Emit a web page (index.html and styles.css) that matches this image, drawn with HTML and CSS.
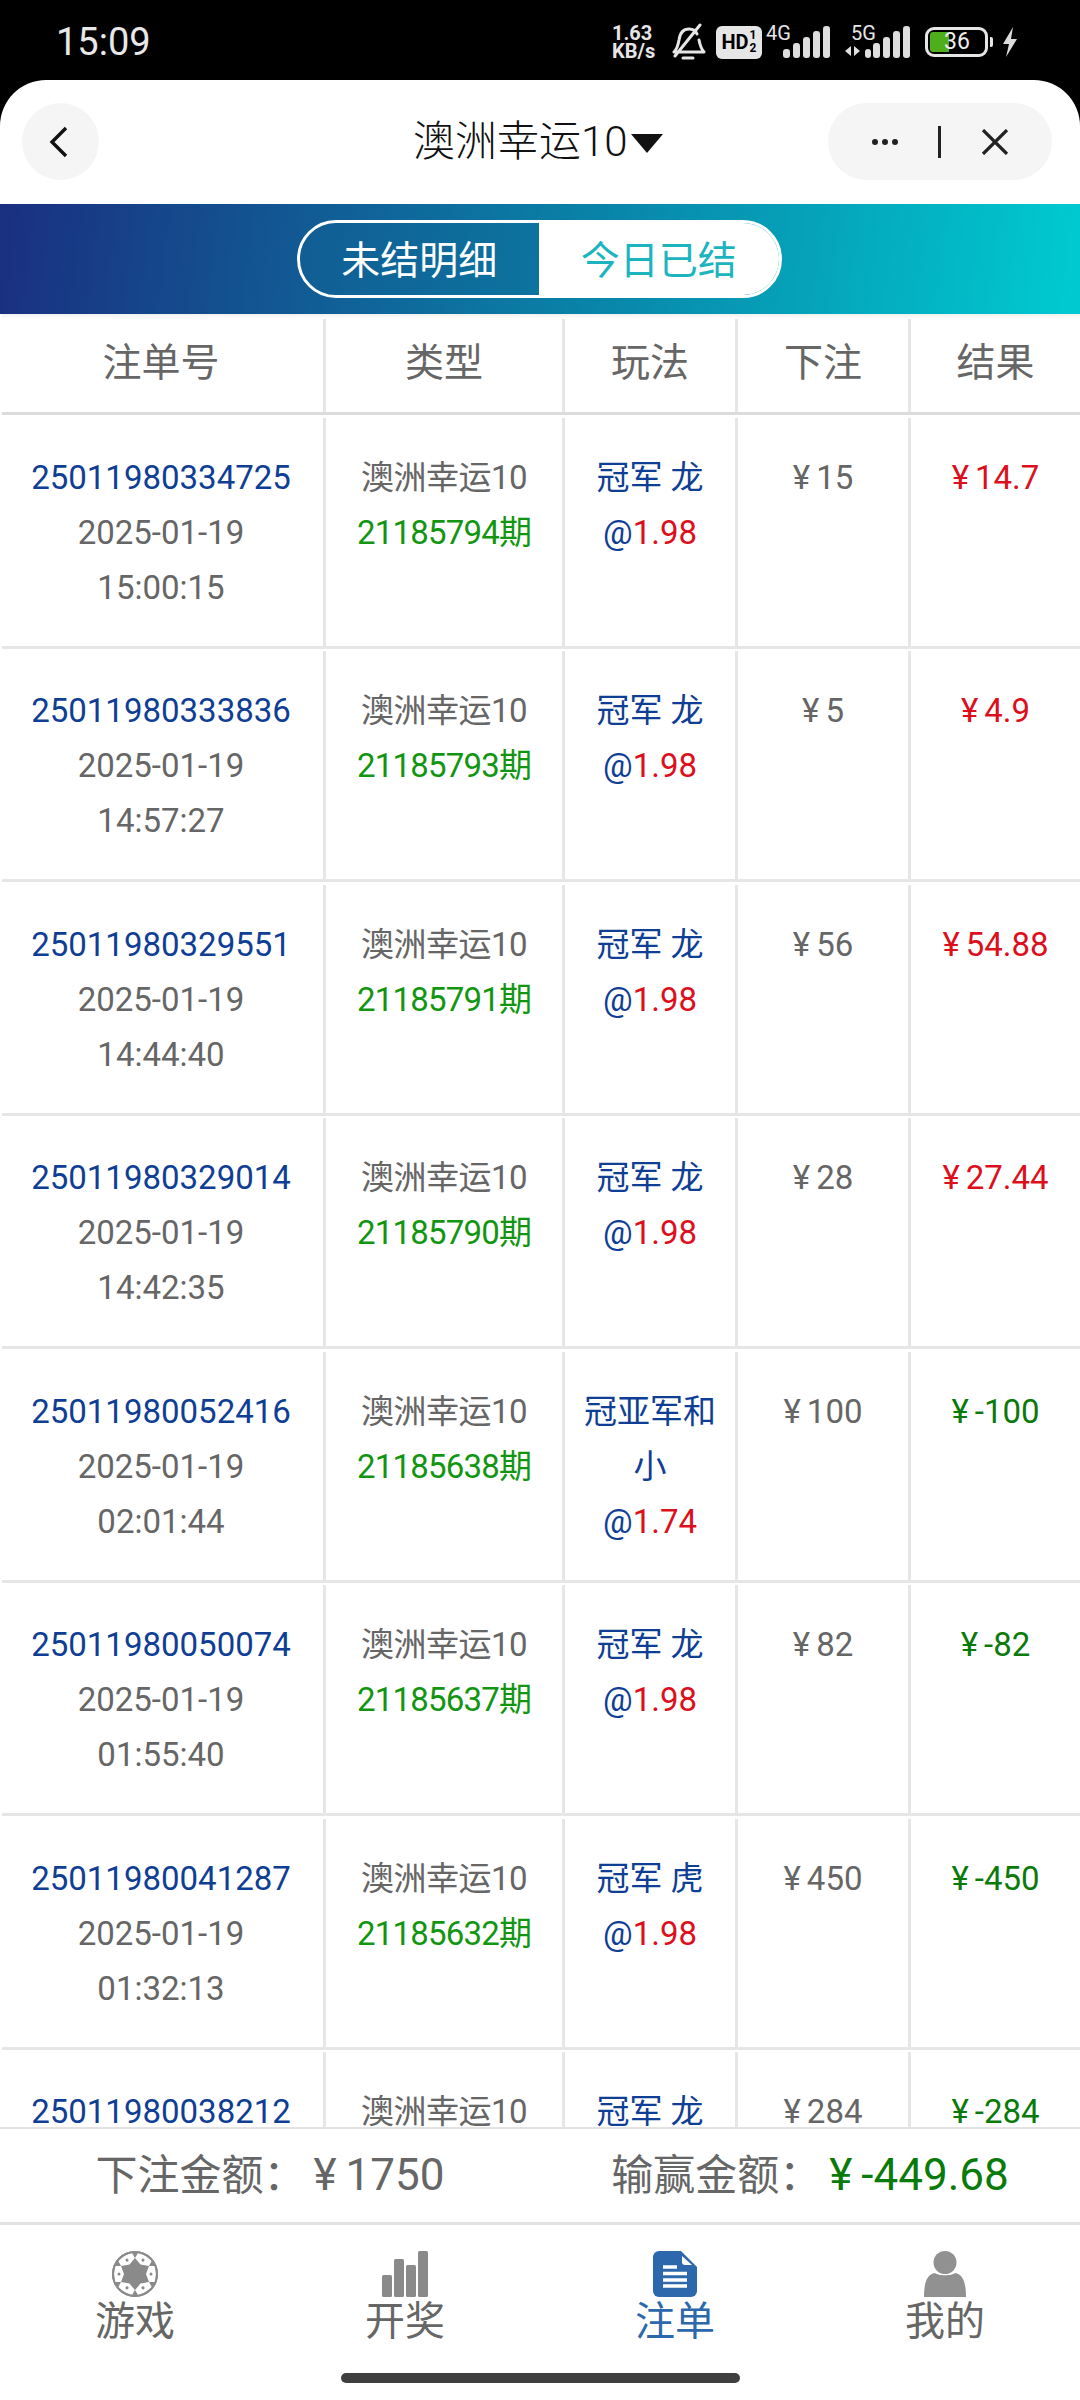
FILE: index.html
```html
<!DOCTYPE html>
<html lang="zh-CN">
<head>
<meta charset="utf-8">
<title>澳洲幸运10</title>
<link rel="stylesheet" href="styles.css">
</head>
<body>
<div class="phone">
  <header class="status">
    <span class="clock">15:09</span>
    <div class="status-icons">
      <span class="speed"><b>1.63</b><b>KB/s</b></span>
      <svg class="bell" viewBox="0 0 36 38" width="36" height="38"><path d="M4 29c3-3 4-6 5-12 1-7 4-11 10-11 4 0 7 2 8 5M29 17c1 5 2 9 5 12H4M13 35h10M5 33 30 2" fill="none" stroke="#e6e6e6" stroke-width="3" stroke-linecap="round" stroke-linejoin="round"/></svg>
      <span class="hd"><b>HD</b><i><b>1</b><b>2</b></i></span>
      <span class="sig"><em>4G</em><svg viewBox="0 0 47 32" width="47" height="32"><rect x="0" y="23" width="7" height="9" rx="3" fill="#dedede"/><rect x="10" y="17" width="7" height="15" rx="3" fill="#dedede"/><rect x="20" y="11" width="7" height="21" rx="3" fill="#dedede"/><rect x="30" y="5" width="7" height="27" rx="3" fill="#dedede"/><rect x="40" y="0" width="7" height="32" rx="3" fill="#dedede"/></svg></span>
      <span class="sig sig5"><em>5G</em><svg viewBox="0 0 65 32" width="65" height="32"><path d="M6 20v10L0 25zM9 20v10l6-5z" fill="#dedede"/><rect x="20" y="23" width="6" height="9" rx="3" fill="#dedede"/><rect x="28" y="17" width="7" height="15" rx="3" fill="#dedede"/><rect x="38" y="11" width="7" height="21" rx="3" fill="#dedede"/><rect x="48" y="5" width="7" height="27" rx="3" fill="#dedede"/><rect x="58" y="0" width="7" height="32" rx="3" fill="#dedede"/></svg></span>
      <span class="battery"><span class="battery-fill"></span><span class="battery-num">36</span></span>
      <span class="nub"></span>
      <svg class="bolt" viewBox="0 0 16 30" width="16" height="30"><path d="M11 0 1 17h6l-3 13 11-18H9z" fill="#dcdcdc"/></svg>
    </div>
  </header>
  <div class="sheet">
    <nav class="topbar">
      <button class="back"><svg viewBox="0 0 20 32" width="20" height="32"><path d="M17 2 3 16l14 14" fill="none" stroke="#111" stroke-width="3.4"/></svg></button>
      <h1 class="title">澳洲幸运10<span class="caret"></span></h1>
      <div class="capsule">
        <svg viewBox="0 0 28 8" width="28" height="8"><circle cx="4" cy="4" r="3" fill="#222"/><circle cx="14" cy="4" r="3" fill="#222"/><circle cx="24" cy="4" r="3" fill="#222"/></svg>
        <span class="cap-div"></span>
        <svg viewBox="0 0 28 26" width="28" height="26"><path d="M2 1l24 24M26 1 2 25" fill="none" stroke="#222" stroke-width="3.2"/></svg>
      </div>
    </nav>
    <div class="band">
      <div class="seg">
        <span class="seg-item">未结明细</span>
        <span class="seg-item seg-on">今日已结</span>
      </div>
    </div>
    <div class="thead row-grid">
      <div>注单号</div><div>类型</div><div>玩法</div><div>下注</div><div>结果</div>
    </div>
    <div class="tbody">
      <div class="row row-grid">
        <div class="cell"><p class="blue">25011980334725</p><p>2025-01-19</p><p>15:00:15</p></div>
        <div class="cell"><p class="game">澳洲幸运10</p><p class="green">21185794期</p></div>
        <div class="cell"><p class="blue">冠军 龙</p><p class="blue">@<span class="red">1.98</span></p></div>
        <div class="cell"><p><span class="yen">¥</span>15</p></div>
        <div class="cell"><p class="red"><span class="yen">¥</span>14.7</p></div>
      </div>
      <div class="row row-grid">
        <div class="cell"><p class="blue">25011980333836</p><p>2025-01-19</p><p>14:57:27</p></div>
        <div class="cell"><p class="game">澳洲幸运10</p><p class="green">21185793期</p></div>
        <div class="cell"><p class="blue">冠军 龙</p><p class="blue">@<span class="red">1.98</span></p></div>
        <div class="cell"><p><span class="yen">¥</span>5</p></div>
        <div class="cell"><p class="red"><span class="yen">¥</span>4.9</p></div>
      </div>
      <div class="row row-grid">
        <div class="cell"><p class="blue">25011980329551</p><p>2025-01-19</p><p>14:44:40</p></div>
        <div class="cell"><p class="game">澳洲幸运10</p><p class="green">21185791期</p></div>
        <div class="cell"><p class="blue">冠军 龙</p><p class="blue">@<span class="red">1.98</span></p></div>
        <div class="cell"><p><span class="yen">¥</span>56</p></div>
        <div class="cell"><p class="red"><span class="yen">¥</span>54.88</p></div>
      </div>
      <div class="row row-grid">
        <div class="cell"><p class="blue">25011980329014</p><p>2025-01-19</p><p>14:42:35</p></div>
        <div class="cell"><p class="game">澳洲幸运10</p><p class="green">21185790期</p></div>
        <div class="cell"><p class="blue">冠军 龙</p><p class="blue">@<span class="red">1.98</span></p></div>
        <div class="cell"><p><span class="yen">¥</span>28</p></div>
        <div class="cell"><p class="red"><span class="yen">¥</span>27.44</p></div>
      </div>
      <div class="row row-grid">
        <div class="cell"><p class="blue">25011980052416</p><p>2025-01-19</p><p>02:01:44</p></div>
        <div class="cell"><p class="game">澳洲幸运10</p><p class="green">21185638期</p></div>
        <div class="cell"><p class="blue">冠亚军和</p><p class="blue">小</p><p class="blue">@<span class="red">1.74</span></p></div>
        <div class="cell"><p><span class="yen">¥</span>100</p></div>
        <div class="cell"><p class="dgreen"><span class="yen">¥</span>-100</p></div>
      </div>
      <div class="row row-grid">
        <div class="cell"><p class="blue">25011980050074</p><p>2025-01-19</p><p>01:55:40</p></div>
        <div class="cell"><p class="game">澳洲幸运10</p><p class="green">21185637期</p></div>
        <div class="cell"><p class="blue">冠军 龙</p><p class="blue">@<span class="red">1.98</span></p></div>
        <div class="cell"><p><span class="yen">¥</span>82</p></div>
        <div class="cell"><p class="dgreen"><span class="yen">¥</span>-82</p></div>
      </div>
      <div class="row row-grid">
        <div class="cell"><p class="blue">25011980041287</p><p>2025-01-19</p><p>01:32:13</p></div>
        <div class="cell"><p class="game">澳洲幸运10</p><p class="green">21185632期</p></div>
        <div class="cell"><p class="blue">冠军 虎</p><p class="blue">@<span class="red">1.98</span></p></div>
        <div class="cell"><p><span class="yen">¥</span>450</p></div>
        <div class="cell"><p class="dgreen"><span class="yen">¥</span>-450</p></div>
      </div>
      <div class="row row-grid">
        <div class="cell"><p class="blue">25011980038212</p></div>
        <div class="cell"><p class="game">澳洲幸运10</p></div>
        <div class="cell"><p class="blue">冠军 龙</p></div>
        <div class="cell"><p><span class="yen">¥</span>284</p></div>
        <div class="cell"><p class="dgreen"><span class="yen">¥</span>-284</p></div>
      </div>
    </div>
    <div class="summary">
      <div class="sum-item">下注金额：<span class="sum-val"><span class="yen">¥</span>1750</span></div>
      <div class="sum-item">输赢金额：<span class="sum-val dgreen"><span class="yen">¥</span>-449.68</span></div>
    </div>
    <footer class="tabs">
      <div class="tab">
        <svg viewBox="0 0 46 46" width="46" height="46"><circle cx="23" cy="23" r="23" fill="#8a8a8a"/><g><path d="M37 15h6l1 8-1 8h-6l-3-8z" fill="#fff"/><circle cx="39" cy="23" r="1.500" fill="#8a8a8a"/></g><g transform="rotate(60 23 23)"><path d="M37 15h6l1 8-1 8h-6l-3-8z" fill="#fff"/><circle cx="39" cy="23" r="1.500" fill="#8a8a8a"/></g><g transform="rotate(120 23 23)"><path d="M37 15h6l1 8-1 8h-6l-3-8z" fill="#fff"/><circle cx="39" cy="23" r="1.500" fill="#8a8a8a"/></g><g transform="rotate(180 23 23)"><path d="M37 15h6l1 8-1 8h-6l-3-8z" fill="#fff"/><circle cx="39" cy="23" r="1.500" fill="#8a8a8a"/></g><g transform="rotate(240 23 23)"><path d="M37 15h6l1 8-1 8h-6l-3-8z" fill="#fff"/><circle cx="39" cy="23" r="1.500" fill="#8a8a8a"/></g><g transform="rotate(300 23 23)"><path d="M37 15h6l1 8-1 8h-6l-3-8z" fill="#fff"/><circle cx="39" cy="23" r="1.500" fill="#8a8a8a"/></g><circle cx="23" cy="23" r="22" fill="none" stroke="#8a8a8a" stroke-width="2"/></svg>
        <span>游戏</span>
      </div>
      <div class="tab">
        <svg viewBox="0 0 46 46" width="46" height="46"><rect x="0" y="24" width="10" height="22" rx="1.500" fill="#8a8a8a"/><rect x="12" y="8" width="10" height="38" rx="1.500" fill="#8a8a8a"/><rect x="24" y="14" width="10" height="32" rx="1.500" fill="#8a8a8a"/><rect x="36" y="0" width="10" height="46" rx="1.500" fill="#8a8a8a"/></svg>
        <span>开奖</span>
      </div>
      <div class="tab tab-on">
        <svg viewBox="0 0 44 46" width="44" height="46"><path d="M6 0h22l16 16v24a6 6 0 0 1-6 6H6a6 6 0 0 1-6-6V6a6 6 0 0 1 6-6z" fill="#2c68ab"/><path d="M29 5v6a3 3 0 0 0 3 3h7z" fill="#fff"/><path d="M10 16h14M10 22.500h24M10 29h24M10 35h24" stroke="#fff" stroke-width="3.400"/></svg>
        <span>注单</span>
      </div>
      <div class="tab">
        <svg viewBox="0 0 42 46" width="42" height="46"><circle cx="21" cy="11.500" r="11.500" fill="#919191"/><path d="M0 46c0-14 3-23 11-24 3 3 17 3 20 0 8 1 11 10 11 24z" fill="#919191"/></svg>
        <span>我的</span>
      </div>
    </footer>
    <div class="home-wrap"><span class="home"></span></div>
  </div>
</div>
</body>
</html>
```

FILE: styles.css
```css
* { box-sizing: border-box; margin: 0; padding: 0; }
html, body { width: 1080px; height: 2400px; overflow: hidden; background: #000; }
body { font-family: Roboto, "Noto Sans CJK SC", sans-serif; color: #666; }

.phone { width: 1080px; height: 2400px; display: flex; flex-direction: column; background: #000; }

.status { height: 80px; display: flex; align-items: center; justify-content: space-between; padding: 24px 62px 20px 56px; color: #e6e6e6; flex: none; }
.clock { font-size: 38px; line-height: 36px; color: #e8e8e8; }
.status-icons { display: flex; align-items: center; height: 36px; }
.speed { display: flex; flex-direction: column; width: 52px; margin-right: 6px; font-size: 20px; line-height: 18px; text-align: left; }
.speed b { font-weight: 700; }
.bell { margin-right: 10px; }
.hd { width: 46px; height: 33px; background: #e6e6e6; border-radius: 6px; color: #000; display: flex; align-items: center; justify-content: center; font-size: 20px; margin-right: 4px; }
.hd i { display: flex; flex-direction: column; font-style: normal; font-size: 12px; line-height: 13px; margin-left: 1px; }
.sig { position: relative; display: block; width: 47px; height: 32px; margin-left: 17px; }
.sig svg { display: block; }
.sig em { position: absolute; left: -17px; top: -2px; font-style: normal; font-size: 20px; line-height: 18px; }
.sig5 { width: 65px; margin-left: 15px; }
.sig5 em { left: 6px; }
.battery { position: relative; width: 63px; height: 30px; margin-left: 15px; border: 3px solid #e6e6e6; border-radius: 9px; overflow: hidden; }
.battery-fill { position: absolute; left: 2px; top: 2px; bottom: 2px; width: 19px; background: #4fae1c; border-radius: 3px 0 0 3px; }
.battery-num { position: absolute; left: 16px; top: 0; font-size: 23px; line-height: 24px; color: #eee; }
.nub { width: 3px; height: 10px; margin-left: 2px; background: #e6e6e6; border-radius: 0 2px 2px 0; }
.bolt { margin-left: 9px; }

.sheet { flex: 1; min-height: 0; display: flex; flex-direction: column; background: #fff; border-radius: 46px 46px 0 0; overflow: hidden; }

.topbar { height: 124px; flex: none; display: flex; align-items: flex-start; justify-content: space-between; padding: 23px 28px 0 22px; position: relative; }
.back { width: 77px; height: 77px; border: 0; border-radius: 50%; background: #f5f5f5; display: flex; align-items: center; justify-content: center; padding-right: 4px; }
.title { position: absolute; left: 413px; top: 37px; font-size: 42px; line-height: 50px; font-weight: 300; color: #111; white-space: nowrap; display: flex; align-items: center; }
.caret { width: 0; height: 0; margin-left: 3px; margin-top: 2px; border-left: 16px solid transparent; border-right: 16px solid transparent; border-top: 19px solid #111; }
.capsule { width: 224px; height: 77px; border-radius: 39px; background: #f5f5f5; display: flex; align-items: center; padding-left: 43px; }
.cap-div { width: 3px; height: 32px; margin: 0 40px 0 39px; background: #222; }

.band { height: 110px; flex: none; display: flex; align-items: center; justify-content: center; background: linear-gradient(97deg, #1a2f80 0%, #0a7fa6 52%, #00cbd0 100%); }
.seg { width: 485px; height: 78px; margin-left: -2px; display: flex; border: 3px solid #fff; border-radius: 39px; overflow: hidden; }
.seg-item { flex: 1; display: flex; align-items: center; justify-content: center; padding-bottom: 5px; font-size: 39px; color: #fff; background: rgba(16, 100, 150, 0.35); }
.seg-on { background: #fff; color: #1cb4bf; }

.row-grid { display: grid; grid-template-columns: 324px 239px 173px 173px 169px; }
.thead { height: 101px; flex: none; padding-top: 5px; border-bottom: 3px solid #dcdcdc; margin-left: 2px; font-size: 39px; line-height: 60px; text-align: center; color: #666; box-shadow: inset 0 6px 6px -6px rgba(0, 0, 0, 0.12); }
.thead > div { border-right: 3px solid #e6e6e6; padding-top: 14px; }
.thead > div:first-child { padding-right: 3px; }
.thead > div:last-child { border-right: 0; }

.tbody { flex: 1; min-height: 0; overflow: hidden; }
.row { height: 233.500px; padding-top: 2.500px; margin-left: 2px; }
.cell { height: 231px; padding-top: 32px; border-right: 3px solid #e6e6e6; border-bottom: 3px solid #e6e6e6; text-align: center; font-size: 33px; line-height: 55px; color: #666; }
.cell:first-child { padding-right: 3px; }
.cell:last-child { border-right: 0; }
.game { letter-spacing: -0.5px; }
.yen { margin-right: 6px; }
.blue { color: #0f3e95; }
.green { color: #129612; letter-spacing: -0.8px; }
.dgreen { color: #0a7a0a; }
.red { color: #dd0f1c; }

.summary { height: 98px; flex: none; display: grid; grid-template-columns: 1fr 1fr; align-items: center; background: #fff; border-top: 2px solid #e2e2e2; border-bottom: 3px solid #e2e2e2; }
.sum-item { text-align: center; font-size: 42px; line-height: 60px; color: #666; white-space: nowrap; }
.sum-val { margin-left: 8px; font-size: 44px; }
.sum-val .yen { margin-right: 9px; }

.tabs { height: 118px; flex: none; display: grid; grid-template-columns: repeat(4, 270px); padding-top: 26px; }
.tab { display: flex; flex-direction: column; align-items: center; font-size: 40px; line-height: 50px; color: #666; }
.tab svg { display: block; flex: none; }
.tab-on { color: #2c68ab; }

.home-wrap { flex: none; height: 57px; display: flex; justify-content: center; padding-top: 30px; }
.home { width: 399px; height: 10px; border-radius: 5px; background: #3f3f3f; }
```
